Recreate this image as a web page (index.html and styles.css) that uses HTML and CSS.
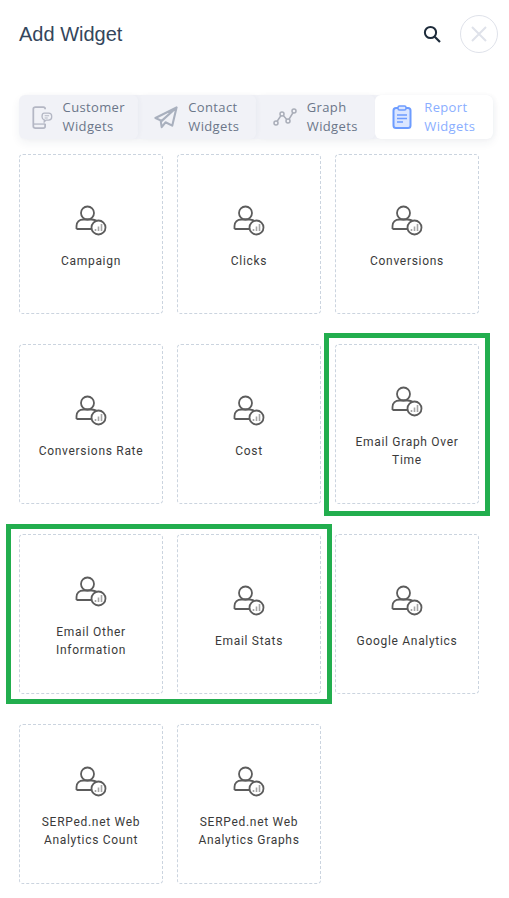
FILE: index.html
```html
<!DOCTYPE html>
<html lang="en">
<head>
  <meta charset="UTF-8">
  <title>Add Widget</title>
  <link rel="stylesheet" href="styles.css">
</head>
<body>
  <svg class="icon-defs" width="0" height="0">
    <symbol id="widget-icon" viewBox="0 0 32 32">
      <circle cx="12.500" cy="8" r="6.500" fill="none" stroke="#5c5c5c" stroke-width="1.800"/>
      <path d="M1.500 24v-3c0-4 3-6.500 7-6.500h8c2.500 0 4.500 .5 6 2.500M1.500 24h15.500" fill="none" stroke="#5c5c5c" stroke-width="1.800"/>
      <circle cx="23.500" cy="22.500" r="7" fill="#fff" stroke="#5c5c5c" stroke-width="1.800"/>
      <path d="M20.500 26v-2M23.500 26v-4.500M26.500 26v-7" fill="none" stroke="#a5a5a5" stroke-width="1.600"/>
    </symbol>
  </svg>

  <!-- Header -->
  <div class="header">
    <h1>Add Widget</h1>
    <div class="header-actions">
      <svg class="search-icon" viewBox="0 0 20 20" width="20" height="20">
        <circle cx="8.500" cy="8.500" r="5.600" fill="none" stroke="#1d2b3a" stroke-width="2"/>
        <path d="M12.700 12.700l5.300 5.300" fill="none" stroke="#1d2b3a" stroke-width="2.200"/>
      </svg>
      <div class="close-btn">
        <svg viewBox="0 0 16 16" width="16" height="16">
          <path d="M1 1l14 14M15 1L1 15" fill="none" stroke="#dfe2ea" stroke-width="2"/>
        </svg>
      </div>
    </div>
  </div>

  <!-- Tabs -->
  <div class="tabs">
    <div class="tab">
      <svg viewBox="0 0 24 26" width="21" height="23">
        <path d="M15 3.500V3c0-1-1-2-2-2H4C2.500 1 1.500 2 1.500 3v20c0 1 1 2 2.500 2h9c1 0 2-1 2-2v-3" fill="none" stroke="#b4b7c4" stroke-width="2"/>
        <path d="M1.500 20.500H15" fill="none" stroke="#b4b7c4" stroke-width="1.500"/>
        <path d="M14 8h5c2 0 3.500 1.500 3.500 3.500v1c0 2-1.500 3.500-3.500 3.500h-3l-2 2v-2.200c-1.500-.5-2.500-1.800-2.500-3.300v-1C11.500 9.500 12 8 14 8z" fill="#f1f2f7" stroke="#b4b7c4" stroke-width="1.500"/>
        <path d="M14.500 11h5M14.500 13.500h3.500" fill="none" stroke="#b4b7c4" stroke-width="1.200"/>
      </svg>
      <span class="tab-label">Customer<br>Widgets</span>
    </div>
    <div class="tab">
      <svg viewBox="0 0 25 24" width="24" height="23">
        <path d="M23.500 1.500L1.500 12.500l6.500 3L23.500 1.500zM23.500 1.500L19 20.500l-7-3.500-4 5-1-6.500" fill="none" stroke="#a9b0be" stroke-width="2.200" stroke-linejoin="round"/>
      </svg>
      <span class="tab-label">Contact<br>Widgets</span>
    </div>
    <div class="tab">
      <svg viewBox="0 0 24 18" width="24" height="18">
        <path d="M3 15l6-9 6 7 6-10" fill="none" stroke="#a9adb8" stroke-width="1.500"/>
        <g fill="#f1f2f7" stroke="#a9adb8" stroke-width="1.500">
          <circle cx="3" cy="15" r="2"/>
          <circle cx="9" cy="6" r="2"/>
          <circle cx="15" cy="13" r="2"/>
          <circle cx="21" cy="3" r="2"/>
        </g>
      </svg>
      <span class="tab-label">Graph<br>Widgets</span>
    </div>
    <div class="tab tab-active">
      <svg viewBox="0 0 22 24" width="22" height="24">
        <rect x="1.500" y="3" width="17" height="20" rx="2.500" fill="#dbe6ff" stroke="#6d9cff" stroke-width="2"/>
        <rect x="6" y="1" width="8" height="4" rx="1.500" fill="#dbe6ff" stroke="#6d9cff" stroke-width="1.500"/>
        <path d="M5 10h10M5 13.500h10M5 17h6" fill="none" stroke="#6d9cff" stroke-width="1.500"/>
      </svg>
      <span class="tab-label">Report<br>Widgets</span>
    </div>
  </div>

  <!-- Widget cards -->
  <div class="widget-grid">
    <div class="widget-card"><svg class="widget-icon"><use href="#widget-icon"/></svg><div class="widget-name">Campaign</div></div>
    <div class="widget-card"><svg class="widget-icon"><use href="#widget-icon"/></svg><div class="widget-name">Clicks</div></div>
    <div class="widget-card"><svg class="widget-icon"><use href="#widget-icon"/></svg><div class="widget-name">Conversions</div></div>
    <div class="widget-card"><svg class="widget-icon"><use href="#widget-icon"/></svg><div class="widget-name">Conversions Rate</div></div>
    <div class="widget-card"><svg class="widget-icon"><use href="#widget-icon"/></svg><div class="widget-name">Cost</div></div>
    <div class="widget-card"><svg class="widget-icon"><use href="#widget-icon"/></svg><div class="widget-name">Email Graph Over Time</div></div>
    <div class="widget-card"><svg class="widget-icon"><use href="#widget-icon"/></svg><div class="widget-name">Email Other Information</div></div>
    <div class="widget-card"><svg class="widget-icon"><use href="#widget-icon"/></svg><div class="widget-name">Email Stats</div></div>
    <div class="widget-card"><svg class="widget-icon"><use href="#widget-icon"/></svg><div class="widget-name">Google Analytics</div></div>
    <div class="widget-card"><svg class="widget-icon"><use href="#widget-icon"/></svg><div class="widget-name">SERPed.net Web Analytics Count</div></div>
    <div class="widget-card"><svg class="widget-icon"><use href="#widget-icon"/></svg><div class="widget-name">SERPed.net Web Analytics Graphs</div></div>
  </div>

  <!-- Green highlight boxes -->
  <div class="highlight highlight-one"></div>
  <div class="highlight highlight-two"></div>
</body>
</html>
```

FILE: styles.css
```css
body {
  margin: 0;
  background: #ffffff;
  font-family: 'Roboto', sans-serif;
  position: relative;
  height: 898px;
  overflow: hidden;
}

.icon-defs {
  position: absolute;
}

/* Header */
.header {
  display: flex;
  justify-content: space-between;
  align-items: center;
  height: 38px;
  padding: 15px 11px 0 19px;
}

h1 {
  margin: 0;
  font-family: 'Liberation Sans', sans-serif;
  font-size: 20px;
  font-weight: 400;
  color: #34465c;
}

.header-actions {
  display: flex;
  align-items: center;
  gap: 18px;
}

.search-icon {
  display: block;
}

.close-btn {
  width: 36px;
  height: 36px;
  border: 1px solid #dfe2ea;
  border-radius: 50%;
  display: flex;
  justify-content: center;
  align-items: center;
}

/* Tabs */
.tabs {
  display: flex;
  width: 474px;
  height: 44px;
  margin: 42px 0 0 19px;
  border-radius: 6px;
  background: #f1f2f7;
  box-shadow: 0 4px 10px rgba(40, 50, 80, 0.06);
}

.tab {
  flex: 1;
  display: flex;
  justify-content: center;
  align-items: center;
  gap: 10px;
  border-radius: 6px;
  box-shadow: 2px 0 4px rgba(40, 50, 80, 0.03);
}

.tab svg {
  flex-shrink: 0;
}

.tab-label {
  font-family: 'Open Sans', sans-serif;
  font-size: 13px;
  line-height: 19px;
  letter-spacing: 0.35px;
  color: #6b7689;
}

.tab-active {
  background: #ffffff;
}

.tab-active .tab-label {
  color: #8aaeff;
}

/* Cards */
.widget-grid {
  display: grid;
  grid-template-columns: repeat(3, 144px);
  grid-auto-rows: 160px;
  column-gap: 14px;
  row-gap: 30px;
  margin: 15px 0 0 19px;
}

.widget-card {
  box-sizing: border-box;
  border: 1px dashed #cbd4df;
  border-radius: 4px;
  padding: 6px 14px 0;
  display: flex;
  flex-direction: column;
  justify-content: center;
  text-align: center;
}

.widget-icon {
  display: block;
  flex-shrink: 0;
  width: 32px;
  height: 32px;
  margin: 0 auto 15px;
}

.widget-name {
  font-size: 12px;
  line-height: 18px;
  letter-spacing: 0.7px;
  color: #3a3a3a;
}

/* Highlights sit over the cards */
.highlight {
  position: absolute;
  box-sizing: border-box;
  border: 5px solid #22ae4e;
}

.highlight-one {
  left: 324px;
  top: 333px;
  width: 166px;
  height: 183px;
}

.highlight-two {
  left: 6px;
  top: 524px;
  width: 326px;
  height: 180px;
}
```
